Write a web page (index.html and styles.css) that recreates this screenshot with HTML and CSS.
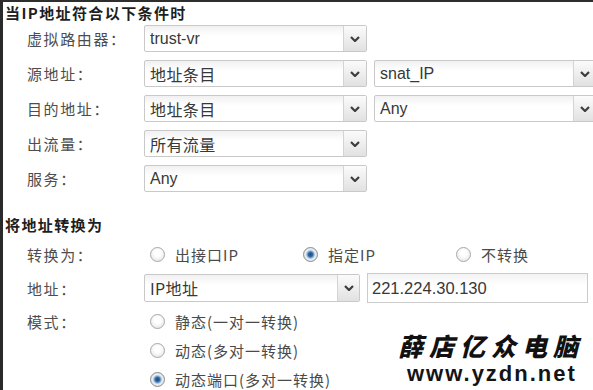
FILE: index.html
```html
<!DOCTYPE html>
<html lang="zh">
<head>
<meta charset="utf-8">
<link rel="stylesheet" href="styles.css">
</head>
<body>
<div class="frame">
  <div class="heading">当IP地址符合以下条件时</div>
  <div class="rows">
    <div class="row">
      <div class="label">虚拟路由器：</div>
      <div class="select"><span class="val latin">trust-vr</span><span class="arrow"><svg width="10" height="6" viewBox="0 0 10 6"><polyline points="1,1 5,5 9,1" fill="none" stroke="#3d3d3d" stroke-width="2.2"/></svg></span></div>
    </div>
    <div class="row">
      <div class="label">源地址：</div>
      <div class="select"><span class="val">地址条目</span><span class="arrow"><svg width="10" height="6" viewBox="0 0 10 6"><polyline points="1,1 5,5 9,1" fill="none" stroke="#3d3d3d" stroke-width="2.2"/></svg></span></div>
      <div class="select"><span class="val latin">snat_IP</span><span class="arrow"><svg width="10" height="6" viewBox="0 0 10 6"><polyline points="1,1 5,5 9,1" fill="none" stroke="#3d3d3d" stroke-width="2.2"/></svg></span></div>
    </div>
    <div class="row">
      <div class="label">目的地址：</div>
      <div class="select"><span class="val">地址条目</span><span class="arrow"><svg width="10" height="6" viewBox="0 0 10 6"><polyline points="1,1 5,5 9,1" fill="none" stroke="#3d3d3d" stroke-width="2.2"/></svg></span></div>
      <div class="select"><span class="val latin">Any</span><span class="arrow"><svg width="10" height="6" viewBox="0 0 10 6"><polyline points="1,1 5,5 9,1" fill="none" stroke="#3d3d3d" stroke-width="2.2"/></svg></span></div>
    </div>
    <div class="row">
      <div class="label">出流量：</div>
      <div class="select"><span class="val">所有流量</span><span class="arrow"><svg width="10" height="6" viewBox="0 0 10 6"><polyline points="1,1 5,5 9,1" fill="none" stroke="#3d3d3d" stroke-width="2.2"/></svg></span></div>
    </div>
    <div class="row">
      <div class="label">服务：</div>
      <div class="select"><span class="val latin">Any</span><span class="arrow"><svg width="10" height="6" viewBox="0 0 10 6"><polyline points="1,1 5,5 9,1" fill="none" stroke="#3d3d3d" stroke-width="2.2"/></svg></span></div>
    </div>
  </div>

  <div class="heading heading2">将地址转换为</div>

  <div class="radio-row">
    <div class="label">转换为：</div>
    <div class="opt"><span class="radio"></span><span class="opt-text">出接口IP</span></div>
    <div class="opt"><span class="radio checked"></span><span class="opt-text">指定IP</span></div>
    <div class="opt"><span class="radio"></span><span class="opt-text">不转换</span></div>
  </div>

  <div class="row addr-row">
    <div class="label">地址：</div>
    <div class="select select-addr"><span class="val">IP地址</span><span class="arrow"><svg width="10" height="6" viewBox="0 0 10 6"><polyline points="1,1 5,5 9,1" fill="none" stroke="#3d3d3d" stroke-width="2.2"/></svg></span></div>
    <div class="input latin">221.224.30.130</div>
  </div>

  <div class="mode">
    <div class="mode-row">
      <div class="label">模式：</div>
      <div class="opt"><span class="radio"></span><span class="opt-text">静态(一对一转换)</span></div>
    </div>
    <div class="mode-row">
      <div class="label"></div>
      <div class="opt"><span class="radio"></span><span class="opt-text">动态(多对一转换)</span></div>
    </div>
    <div class="mode-row">
      <div class="label"></div>
      <div class="opt"><span class="radio checked"></span><span class="opt-text">动态端口(多对一转换)</span></div>
    </div>
  </div>

  <div class="watermark">
    <div class="wm-cn">薛店亿众电脑</div>
    <div class="wm-url">www.yzdn.net</div>
  </div>
</div>
</body>
</html>
```

FILE: styles.css
```css
html, body {
  margin: 0;
  padding: 0;
  background: #fff;
  overflow: hidden;
}

.frame {
  position: relative;
  width: 593px;
  height: 390px;
  box-sizing: border-box;
  border-top: 2px solid #2e2e2e;
  border-left: 3px solid #2a2a2a;
  font-family: "Noto Sans CJK SC", "Liberation Sans", sans-serif;
  color: #4a4a4a;
  overflow: hidden;
}

.latin {
  font-family: "Liberation Sans", "Noto Sans CJK SC", sans-serif;
}

.heading {
  font-size: 15px;
  font-weight: 700;
  color: #1e1e1e;
  line-height: 22px;
  height: 22px;
  padding-left: 2px;
  letter-spacing: 1.4px;
  margin-bottom: 1px;
}

.heading2 {
  margin-top: 22px;
  margin-bottom: 0;
}

.rows {
  display: flex;
  flex-direction: column;
  gap: 8px;
}

.row {
  display: flex;
  align-items: center;
  height: 27px;
}

.label {
  width: 141px;
  flex: none;
  box-sizing: border-box;
  padding-left: 24px;
  font-size: 15px;
  letter-spacing: 1.6px;
  color: #4d4d4d;
  white-space: nowrap;
}

.select {
  flex: none;
  width: 223px;
  height: 27px;
  box-sizing: border-box;
  border: 1px solid #c9c9c9;
  border-radius: 2px;
  background: linear-gradient(#f1f1f1, #ffffff 40%);
  display: flex;
  align-items: center;
  margin-right: 7px;
}

.val {
  flex: 1;
  padding-left: 5px;
  font-size: 16px;
  color: #383838;
  letter-spacing: 0.4px;
  white-space: nowrap;
}

.val.latin {
  letter-spacing: 0;
}

.arrow {
  flex: none;
  width: 23px;
  height: 100%;
  box-sizing: border-box;
  border-left: 1px solid #d4d4d4;
  background: linear-gradient(#fbfbfb, #e1e1e1);
  display: flex;
  align-items: center;
  justify-content: center;
}

.radio-row {
  display: flex;
  align-items: center;
  height: 22px;
  margin-top: 7px;
}

.opt {
  flex: none;
  width: 153px;
  display: flex;
  align-items: center;
  box-sizing: border-box;
  padding-left: 6px;
}

.radio {
  flex: none;
  width: 15px;
  height: 15px;
  box-sizing: border-box;
  border-radius: 50%;
  border: 1px solid #a8a8a8;
  background: radial-gradient(circle at 50% 40%, #ffffff 30%, #dedede 100%);
  margin-right: 10px;
}

.radio.checked {
  border-color: #8c8c8c;
  background: radial-gradient(circle at 50% 50%, #1f4f86 0, #2d63a0 22%, #7fa6cf 36%, #e8eef5 52%, #d6d6d6 100%);
}

.opt-text {
  font-size: 15px;
  letter-spacing: 1px;
  color: #4a4a4a;
  white-space: nowrap;
}

.addr-row {
  height: 28px;
  margin-top: 9px;
}

.select-addr {
  width: 216px;
  height: 28px;
  margin-right: 7px;
}

.select-addr .arrow {
  width: 22px;
}

.input {
  flex: none;
  width: 221px;
  height: 30px;
  box-sizing: border-box;
  border: 1px solid #cbcbcb;
  background: linear-gradient(#f3f3f3, #ffffff 40%);
  padding-left: 4px;
  font-size: 16.5px;
  line-height: 28px;
  color: #383838;
}

.mode {
  margin-top: 5px;
  display: flex;
  flex-direction: column;
}

.mode-row {
  display: flex;
  align-items: center;
  height: 29px;
}

.watermark {
  position: absolute;
  left: 395px;
  top: 328px;
  width: 196px;
  white-space: nowrap;
}

.wm-cn {
  font-family: "Noto Sans CJK SC", sans-serif;
  font-weight: 900;
  font-size: 25px;
  line-height: 30px;
  letter-spacing: 6px;
  color: #111;
  font-style: italic;
}

.wm-url {
  font-family: "Liberation Sans", sans-serif;
  font-weight: 700;
  font-size: 22px;
  line-height: 24px;
  letter-spacing: 2px;
  color: #141414;
  padding-left: 9px;
  margin-top: 2px;
}
```
